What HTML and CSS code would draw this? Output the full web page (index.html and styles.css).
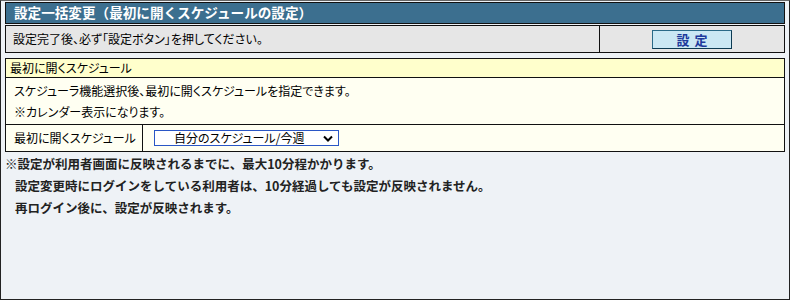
FILE: index.html
```html
<!DOCTYPE html>
<html lang="ja">
<head>
<meta charset="utf-8">
<link rel="stylesheet" href="styles.css">
</head>
<body>
<div class="frame">
  <div class="title">設定一括変更（最初に開くスケジュールの設定）</div>
  <div class="actionbar">
    <div class="action-msg">設定完了後、必ず「設定ボタン」を押してください。</div>
    <div class="action-btn"><button class="setbtn" type="button">設 定</button></div>
  </div>
  <div class="panel">
    <div class="panel-head">最初に開くスケジュール</div>
    <div class="panel-desc">
      <div>スケジューラ機能選択後、最初に開くスケジュールを指定できます。</div>
      <div>※カレンダー表示になります。</div>
    </div>
    <div class="panel-row">
      <div class="row-label">最初に開くスケジュール</div>
      <div class="row-field">
        <div class="select"><span class="select-text">自分のスケジュール/今週</span><svg class="chev" width="10" height="7" viewBox="0 0 10 7"><path d="M1 1.5 L5 5.5 L9 1.5" fill="none" stroke="#000" stroke-width="2"/></svg></div>
      </div>
    </div>
  </div>
  <div class="notes">
    <div>※設定が利用者画面に反映されるまでに、最大10分程かかります。</div>
    <div class="indent">設定変更時にログインをしている利用者は、10分経過しても設定が反映されません。</div>
    <div class="indent">再ログイン後に、設定が反映されます。</div>
  </div>
</div>
</body>
</html>
```

FILE: styles.css
```css
html, body {
  margin: 0;
  padding: 0;
}
body {
  font-family: "Noto Sans CJK JP", "Noto Sans", sans-serif;
  font-size: 12px;
  color: #000;
  background: #eef2f6;
  font-feature-settings: "palt";
}
.frame {
  width: 790px;
  height: 300px;
  box-sizing: border-box;
  border: 1px solid #222;
  border-top-color: #666;
  background: #eef2f6;
  padding: 1px 4px 0 4px;
}
.title {
  height: 22px;
  box-sizing: border-box;
  border: 1px solid #111;
  background: #3c6f8f;
  color: #fff;
  font-weight: bold;
  font-size: 13.6px;
  line-height: 19px;
  padding-left: 8px;
  font-feature-settings: normal;
}
.actionbar {
  margin-top: 1px;
  height: 28px;
  box-sizing: border-box;
  border: 1px solid #111;
  background: #e6e6e6;
  display: flex;
}
.action-msg {
  flex: 1;
  padding-left: 7px;
  line-height: 25px;
  border-right: 1px solid #111;
}
.action-btn {
  width: 184px;
  display: flex;
  justify-content: center;
  align-items: center;
}
.setbtn {
  width: 80px;
  height: 19px;
  box-sizing: border-box;
  border: 1px solid #2a6a88;
  border-right-color: #0c3a52;
  border-bottom-color: #0c3a52;
  background: #cbe8f4;
  color: #1e3a9c;
  font-family: inherit;
  font-weight: bold;
  font-size: 13px;
  line-height: 15px;
  padding: 0;
  letter-spacing: 1px;
  text-indent: 1px;
}
.panel {
  margin-top: 5px;
  border: 1px solid #111;
  background: #fffff2;
}
.panel-head {
  height: 18px;
  line-height: 18px;
  background: #ffffcc;
  border-bottom: 1px solid #111;
  padding-left: 4px;
}
.panel-desc {
  padding: 2px 0 2px 8px;
  line-height: 21px;
  border-bottom: 1px solid #111;
}
.panel-row {
  display: flex;
  height: 26px;
}
.row-label {
  width: 128px;
  padding-left: 8px;
  line-height: 26px;
  border-right: 1px solid #111;
}
.row-field {
  flex: 1;
  display: flex;
  align-items: center;
  padding-left: 11px;
}
.select {
  width: 185px;
  height: 16px;
  box-sizing: border-box;
  border: 1px solid #2a56c6;
  background: #fff;
  display: flex;
  align-items: center;
  padding: 0 5px 0 19px;
  white-space: nowrap;
}
.select-text {
  flex: 1;
  font-size: 12px;
  line-height: 14px;
}
.chev {
  display: block;
}
.notes {
  font-weight: bold;
  font-size: 12.5px;
  font-feature-settings: normal;
  color: #222;
  line-height: 22px;
  padding-top: 1px;
}
.indent {
  padding-left: 10px;
}
```
